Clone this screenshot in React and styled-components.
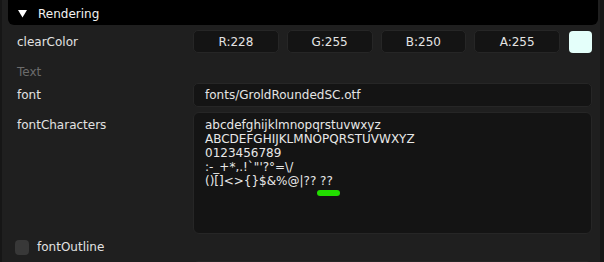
import styled, { createGlobalStyle } from 'styled-components';

const Global = createGlobalStyle`
  html, body {
    margin: 0;
    padding: 0;
    background: #1f1f1f;
    overflow: hidden;
  }
  body {
    font-family: 'DejaVu Sans', 'Liberation Sans', sans-serif;
    font-size: 12px;
    color: #e2e2e2;
  }
`;

const charLines = [
  'abcdefghijklmnopqrstuvwxyz',
  'ABCDEFGHIJKLMNOPQRSTUVWXYZ',
  '0123456789',
  ':-_+*,.!`"\'?°=\\/',
  '()[]<>{}$&%@|?? ??',
];

function App() {
  return (
    <>
      <Global />
      <Frame>
        <Strip />
        <Panel>
          <Header>
            <svg width="9" height="8" viewBox="0 0 9 8">
              <polygon points="0,0 9,0 4.5,7.5" fill="#fff" />
            </svg>
            <span>Rendering</span>
          </Header>

          <Row $top={5}>
            <Label $pad={1}>clearColor</Label>
            <Fields>
              <Field $center>R:228</Field>
              <Field $center>G:255</Field>
              <Field $center>B:250</Field>
              <Field $center>A:255</Field>
              <Swatch />
            </Fields>
          </Row>

          <SectionTitle>Text</SectionTitle>

          <Row $top={4}>
            <Label>font</Label>
            <Field $tall>fonts/GroldRoundedSC.otf</Field>
          </Row>

          <Row $top={5} $start>
            <Label $pad={6}>fontCharacters</Label>
            <TextArea>
              {charLines.map((line, i) => (
                <div key={i}>{line}</div>
              ))}
              <Caret />
            </TextArea>
          </Row>

          <Row $top={6}>
            <CheckLabel>
              <Check />
              fontOutline
            </CheckLabel>
          </Row>

          <Row $top={6}>
            <Label />
            <Field $tall />
          </Row>
        </Panel>
        <Strip $right />
      </Frame>
    </>
  );
}

export default App;

let Frame = styled.div`
  display: flex;
  width: 604px;
  height: 262px;
  overflow: hidden;
`;

let Strip = styled.div`
  width: ${(p) => (p.$right ? '4px' : '2px')};
  background: #161616;
  flex-shrink: 0;
`;

let Panel = styled.div`
  flex: 1;
  display: flex;
  flex-direction: column;
  padding: 0 2px 0 6px;
`;

let Header = styled.div`
  height: 25px;
  box-sizing: border-box;
  padding-top: 2px;
  background: #000;
  border-radius: 0 0 6px 6px;
  display: flex;
  align-items: center;
  gap: 11px;
  padding-left: 10px;
  color: #f2f2f2;
  flex-shrink: 0;
`;

let Row = styled.div`
  display: flex;
  align-items: ${(p) => (p.$start ? 'flex-start' : 'center')};
  margin-top: ${(p) => p.$top}px;
  padding-right: 6px;
  flex-shrink: 0;
`;

let Label = styled.div`
  width: 176px;
  padding-left: 9px;
  padding-top: ${(p) => p.$pad || 0}px;
  flex-shrink: 0;
  line-height: 14px;
  color: #e2e2e2;
`;

let Fields = styled.div`
  flex: 1;
  display: flex;
  gap: 8px;
  align-items: center;
`;

let Field = styled.div`
  flex: 1;
  height: ${(p) => (p.$tall ? '24px' : '23px')};
  box-sizing: border-box;
  background: #141414;
  border: 1px solid #262626;
  border-radius: 5px;
  display: flex;
  align-items: center;
  justify-content: ${(p) => (p.$center ? 'center' : 'flex-start')};
  padding-left: ${(p) => (p.$center ? '0' : '11px')};
  color: #e4e4e4;
`;

let Swatch = styled.div`
  width: 23px;
  height: 22px;
  margin-left: 1px;
  background: #e4fffa;
  border-radius: 4px;
  flex-shrink: 0;
`;

let SectionTitle = styled.div`
  margin-top: 12px;
  padding-left: 9px;
  line-height: 14px;
  color: #6b6b6b;
`;

let TextArea = styled.div`
  flex: 1;
  height: 122px;
  box-sizing: border-box;
  background: #141414;
  border: 1px solid #262626;
  border-radius: 6px;
  padding: 5px 0 0 11px;
  line-height: 14px;
  color: #e8e8e8;
`;

let Caret = styled.div`
  width: 23px;
  height: 6px;
  margin: 2px 0 0 112px;
  background: #22dd00;
  border-radius: 3px;
`;

let CheckLabel = styled.div`
  display: flex;
  align-items: center;
  gap: 8px;
  padding-left: 7px;
  line-height: 15px;
`;

let Check = styled.div`
  width: 14px;
  height: 15px;
  background: #383838;
  border-radius: 4px;
`;
